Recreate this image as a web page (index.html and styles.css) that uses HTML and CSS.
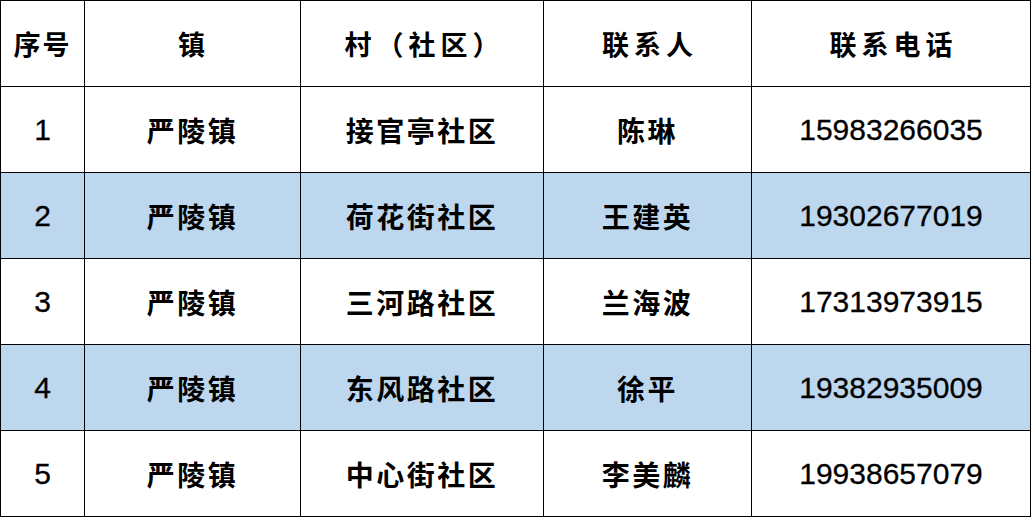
FILE: index.html
```html
<!DOCTYPE html>
<html lang="zh-CN">
<head>
<meta charset="utf-8">
<link rel="stylesheet" href="styles.css">
</head>
<body>
<table class="contacts">
  <colgroup>
    <col class="c-no"><col class="c-town"><col class="c-village"><col class="c-person"><col class="c-phone">
  </colgroup>
  <thead>
    <tr>
      <th class="hd hd-no">序号</th>
      <th class="hd">镇</th>
      <th class="hd hd-wide">村（社区）</th>
      <th class="hd hd-wide">联系人</th>
      <th class="hd hd-wide">联系电话</th>
    </tr>
  </thead>
  <tbody>
    <tr>
      <td class="num">1</td><td class="cjk">严陵镇</td><td class="cjk">接官亭社区</td><td class="cjk">陈琳</td><td class="num">15983266035</td>
    </tr>
    <tr class="alt">
      <td class="num">2</td><td class="cjk">严陵镇</td><td class="cjk">荷花街社区</td><td class="cjk">王建英</td><td class="num">19302677019</td>
    </tr>
    <tr>
      <td class="num">3</td><td class="cjk">严陵镇</td><td class="cjk">三河路社区</td><td class="cjk">兰海波</td><td class="num">17313973915</td>
    </tr>
    <tr class="alt">
      <td class="num">4</td><td class="cjk">严陵镇</td><td class="cjk">东风路社区</td><td class="cjk">徐平</td><td class="num">19382935009</td>
    </tr>
    <tr>
      <td class="num">5</td><td class="cjk">严陵镇</td><td class="cjk">中心街社区</td><td class="cjk">李美麟</td><td class="num">19938657079</td>
    </tr>
  </tbody>
</table>
</body>
</html>
```
FILE: styles.css
```css
html, body {
  margin: 0;
  padding: 0;
  background: #fff;
}
.contacts {
  border-collapse: collapse;
  table-layout: fixed;
  width: 1030px;
  color: #000;
}
.c-no { width: 84px; }
.c-town { width: 216px; }
.c-village { width: 243px; }
.c-person { width: 208px; }
.c-phone { width: 279px; }
.contacts th, .contacts td {
  border: 1px solid #000;
  height: 85px;
  padding: 0;
  text-align: center;
  vertical-align: middle;
}
.hd {
  font-family: "Noto Sans CJK SC", "Liberation Sans", sans-serif;
  font-weight: 700;
  font-size: 27px;
  letter-spacing: 2px;
}
.hd-wide {
  letter-spacing: 5px;
  text-indent: 5px;
}
.hd-no {
  letter-spacing: 2px;
}
.cjk {
  font-family: "Noto Sans CJK SC", sans-serif;
  font-weight: 700;
  font-size: 28px;
  letter-spacing: 2.5px;
}
.num {
  font-family: "Liberation Sans", Arial, sans-serif;
  font-size: 30px;
  font-weight: 400;
  -webkit-text-stroke: 0.3px #000;
}
.alt td {
  background: #bdd7ee;
}
```
